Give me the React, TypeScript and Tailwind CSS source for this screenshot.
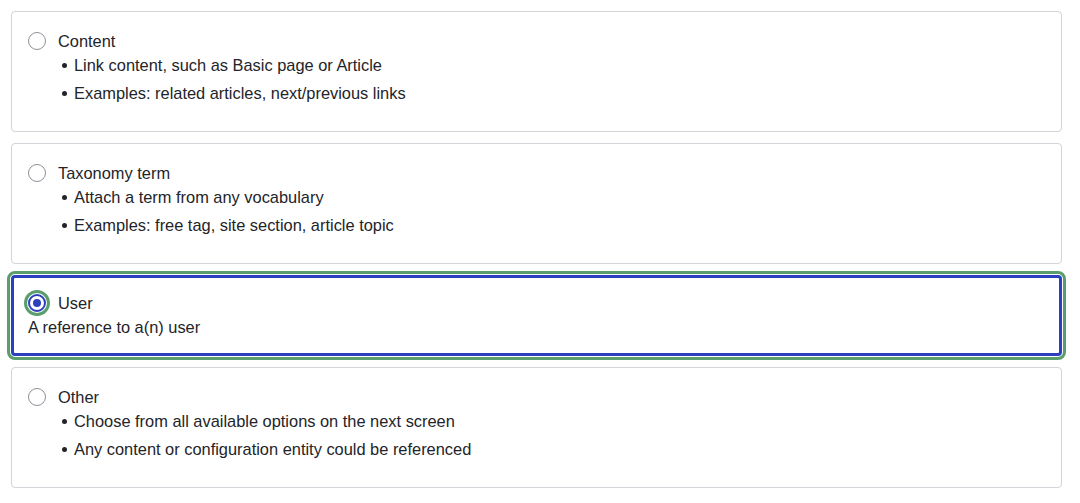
import { useState } from 'react'

interface Option {
  id: string
  label: string
  description?: string
  items?: string[]
}

const options: Option[] = [
  {
    id: 'content',
    label: 'Content',
    items: ['Link content, such as Basic page or Article', 'Examples: related articles, next/previous links'],
  },
  {
    id: 'taxonomy',
    label: 'Taxonomy term',
    items: ['Attach a term from any vocabulary', 'Examples: free tag, site section, article topic'],
  },
  {
    id: 'user',
    label: 'User',
    description: 'A reference to a(n) user',
  },
  {
    id: 'other',
    label: 'Other',
    items: ['Choose from all available options on the next screen', 'Any content or configuration entity could be referenced'],
  },
]

function Radio({ checked }: { checked: boolean }) {
  if (checked) {
    return (
      <span className="w-[18px] h-[18px] shrink-0 rounded-full border-2 border-[#2c3fbf] bg-white flex items-center justify-center outline-[3px] outline-solid outline-[#5a9e6e] outline-offset-1">
        <span className="w-[8px] h-[8px] rounded-full bg-[#2c3fbf]" />
      </span>
    )
  }
  return <span className="w-[18px] h-[18px] shrink-0 rounded-full border border-[#8e9199] bg-white" />
}

export default function App() {
  const [selected, setSelected] = useState('user')

  return (
    <div className="w-[1080px] h-[503px] bg-white pt-[11px] pl-[11px] text-[16.4px] leading-[24px] text-[#232429] font-['Liberation_Sans',Arial,sans-serif]">
      <div className="w-[1051px] flex flex-col gap-[11px]">
        {options.map((opt) => {
          const isSelected = selected === opt.id
          return (
            <div
              key={opt.id}
              onClick={() => setSelected(opt.id)}
              className={
                isSelected
                  ? 'rounded-[4px] border-[3px] border-[#2c3fbf] px-[14px] pt-[13px] pb-[14px] outline-[3px] outline-solid outline-[#5a9e6e] outline-offset-1 cursor-pointer'
                  : 'rounded-[4px] border border-[#d3d4d9] px-[16px] pt-[17px] pb-[26px] cursor-pointer'
              }
            >
              <div className="flex items-center gap-[12px]">
                <Radio checked={isSelected} />
                <span>{opt.label}</span>
              </div>
              {opt.description && <p>{opt.description}</p>}
              {opt.items && (
                <ul className="flex flex-col gap-[4px]">
                  {opt.items.map((item) => (
                    <li key={item} className="flex items-center pl-[34px]">
                      <span className="w-[5px] h-[5px] rounded-full bg-[#232429] mr-[7px]" />
                      <span>{item}</span>
                    </li>
                  ))}
                </ul>
              )}
            </div>
          )
        })}
      </div>
    </div>
  )
}
